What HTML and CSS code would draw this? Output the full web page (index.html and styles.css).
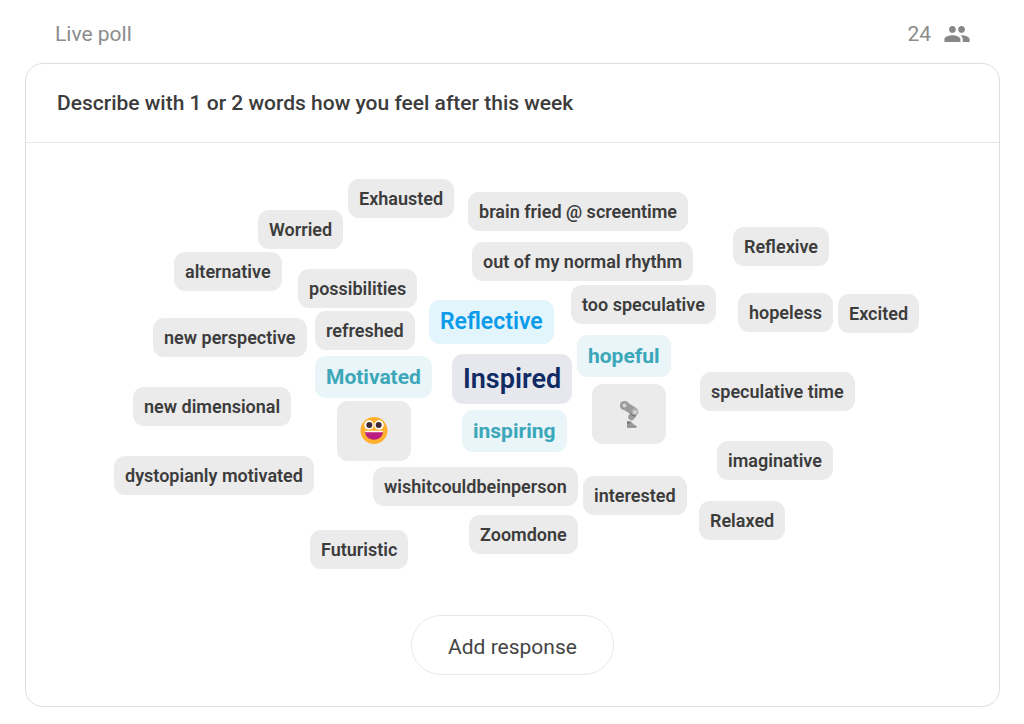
FILE: index.html
```html
<!DOCTYPE html>
<html lang="en">
<head>
<meta charset="utf-8">
<meta name="viewport" content="width=device-width, initial-scale=1">
<title>Live poll</title>
<link rel="stylesheet" href="styles.css">
</head>
<body>
<main class="poll">
  <header class="poll-bar">
    <span class="poll-kind">Live poll</span>
    <span class="voters">24
      <svg class="voters-icon" viewBox="1 5 22 14" role="img" aria-label="participants"><path d="M16 11c1.66 0 2.99-1.34 2.99-3S17.66 5 16 5s-3 1.34-3 3 1.34 3 3 3zm-8 0c1.66 0 2.99-1.34 2.99-3S9.66 5 8 5 5 6.34 5 8s1.34 3 3 3zm0 2c-2.33 0-7 1.17-7 3.5V19h14v-2.5c0-2.33-4.67-3.500-7-3.500zm8 0c-.29 0-.62.02-.97.05 1.160.84 1.970 1.970 1.970 3.450V19h6v-2.500c0-2.330-4.670-3.500-7-3.500z"/></svg>
    </span>
  </header>
  <section class="card">
    <h1 class="question">Describe with 1 or 2 words how you feel after this week</h1>
    <div class="card-body">
      <ul class="cloud">
        <li class="word w-exhausted">Exhausted</li>
        <li class="word w-worried">Worried</li>
        <li class="word w-brain">brain fried @ screentime</li>
        <li class="word w-rhythm">out of my normal rhythm</li>
        <li class="word w-reflexive">Reflexive</li>
        <li class="word w-alternative">alternative</li>
        <li class="word w-possibilities">possibilities</li>
        <li class="word w-too-speculative">too speculative</li>
        <li class="word w-hopeless">hopeless</li>
        <li class="word w-excited">Excited</li>
        <li class="word w-perspective">new perspective</li>
        <li class="word w-refreshed">refreshed</li>
        <li class="word word-large w-reflective">Reflective</li>
        <li class="word word-medium w-hopeful">hopeful</li>
        <li class="word word-medium w-motivated">Motivated</li>
        <li class="word word-top w-inspired">Inspired</li>
        <li class="word w-dimensional">new dimensional</li>
        <li class="word w-time">speculative time</li>
        <li class="word word-emoji w-grin">
          <svg class="emoji" viewBox="0 0 28 28" role="img" aria-label="grinning face">
            <circle cx="14" cy="13.500" r="13.500" fill="#ffb02e"/>
            <circle cx="9" cy="8" r="4.700" fill="#fff"/><circle cx="19" cy="8" r="4.700" fill="#fff"/>
            <circle cx="9.300" cy="8" r="3" fill="#402a32"/><circle cx="18.700" cy="8" r="3" fill="#402a32"/>
            <path d="M5 14h18c0 5-3.500 8.700-9 8.700s-9-3.700-9-8.700z" fill="#bb1d80"/>
            <path d="M5 13.800h18c0 .8-.4 1.500-1.200 1.500H6.200c-.8 0-1.200-.7-1.200-1.500z" fill="#fff"/>
          </svg>
        </li>
        <li class="word word-emoji w-leg">
          <svg class="emoji" viewBox="0 0 28 28" role="img" aria-label="mechanical leg">
            <path d="M9.500 5.500 19 11.500" fill="none" stroke="#9b9b9b" stroke-width="8" stroke-linecap="round"/>
            <path d="M19 13 16.500 17" fill="none" stroke="#9b9b9b" stroke-width="6.500" stroke-linecap="round"/>
            <circle cx="9.500" cy="5.500" r="4.600" fill="#9b9b9b"/><circle cx="9.500" cy="5.500" r="2" fill="#d3d3d3"/>
            <circle cx="20" cy="12" r="3.400" fill="#b4b4b4"/><circle cx="20" cy="12" r="1.600" fill="#ddd"/>
            <path d="m15.500 13.200 2.500 2.400 3 .4" fill="none" stroke="#636363" stroke-width="1"/>
            <path d="M12 21.300h4l2.500 3 3 1.700v1.500H12z" fill="#9b9b9b"/><path d="M12 26.500h9.500v1H12z" fill="#808080"/>
            <circle cx="13.500" cy="22.700" r="1.500" fill="#777"/>
          </svg>
        </li>
        <li class="word word-medium w-inspiring">inspiring</li>
        <li class="word w-imaginative">imaginative</li>
        <li class="word w-dystopianly">dystopianly motivated</li>
        <li class="word w-wish">wishitcouldbeinperson</li>
        <li class="word w-interested">interested</li>
        <li class="word w-relaxed">Relaxed</li>
        <li class="word w-zoomdone">Zoomdone</li>
        <li class="word w-futuristic">Futuristic</li>
      </ul>
      <button class="add" type="button">Add response</button>
    </div>
  </section>
</main>
</body>
</html>
```
FILE: styles.css
```css
* { box-sizing: border-box; }

body {
  margin: 0;
  background: #fff;
  color: #3c3c3c;
  font-family: Roboto, "Liberation Sans", sans-serif;
}

.poll { padding: 0 24px 16px 25px; }

.poll-bar {
  display: flex;
  align-items: center;
  justify-content: space-between;
  padding: 20px 30px 15px;
  color: #8c8c8c;
  font-size: 21px;
  font-weight: 400;
  line-height: 28px;
}

.voters { display: flex; align-items: center; gap: 13px; }
.voters-icon { width: 26px; height: 16px; fill: #878787; }

.card {
  border: 1px solid #dedede;
  border-radius: 18px;
}

.question {
  margin: 0;
  padding: 25px 31px 24px;
  border-bottom: 1px solid #e6e6e6;
  font-size: 21px;
  font-weight: 500;
  line-height: 29px;
}

.card-body {
  display: flex;
  flex-direction: column;
  align-items: center;
  padding-bottom: 31px;
}

/* Free canvas: each word is placed from the canvas origin. */
.cloud {
  position: relative;
  width: 807px;
  height: 472px;
  margin: 0;
  padding: 0;
  list-style: none;
}

.word {
  position: absolute;
  padding: 9px 11px;
  border-radius: 11px;
  background: #ebebeb;
  font-size: 18px;
  font-weight: 600;
  line-height: 21px;
  white-space: nowrap;
}

.word-medium {
  background: #e9f5f8;
  color: #3ba7b9;
  font-size: 21px;
  font-weight: 700;
  line-height: 24px;
}

.word-large {
  background: #e2f4fc;
  color: #0a9bea;
  font-size: 23px;
  line-height: 26px;
}

.word-top {
  background: #e7e8ee;
  color: #102a63;
  font-size: 27px;
  line-height: 32px;
}

.word-emoji { padding: 16px 23px; line-height: 0; }
.emoji { width: 28px; height: 28px; }

.w-exhausted { left: 239px; top: 36px; }
.w-worried { left: 149px; top: 67px; }
.w-brain { left: 359px; top: 49px; }
.w-rhythm { left: 363px; top: 99px; }
.w-reflexive { left: 624px; top: 84px; }
.w-alternative { left: 65px; top: 109px; }
.w-possibilities { left: 189px; top: 126px; }
.w-too-speculative { left: 462px; top: 142px; }
.w-hopeless { left: 629px; top: 150px; }
.w-excited { left: 729px; top: 151px; }
.w-perspective { left: 44px; top: 175px; }
.w-refreshed { left: 206px; top: 168px; }
.w-reflective { left: 320px; top: 157px; }
.w-hopeful { left: 468px; top: 192px; }
.w-motivated { left: 206px; top: 213px; }
.w-inspired { left: 343px; top: 211px; }
.w-dimensional { left: 24px; top: 244px; }
.w-time { left: 591px; top: 229px; }
.w-grin { left: 228px; top: 258px; }
.w-leg { left: 483px; top: 241px; }
.w-inspiring { left: 353px; top: 267px; }
.w-imaginative { left: 608px; top: 298px; }
.w-dystopianly { left: 5px; top: 313px; }
.w-wish { left: 264px; top: 324px; }
.w-interested { left: 474px; top: 333px; }
.w-relaxed { left: 590px; top: 358px; }
.w-zoomdone { left: 360px; top: 372px; }
.w-futuristic { left: 201px; top: 387px; }

.add {
  padding: 17px 36px 13px;
  border: 1px solid #e8e8e8;
  border-radius: 30px;
  background: #fff;
  color: #444;
  font-family: inherit;
  font-size: 21px;
  font-weight: 400;
  line-height: 28px;
}
```
